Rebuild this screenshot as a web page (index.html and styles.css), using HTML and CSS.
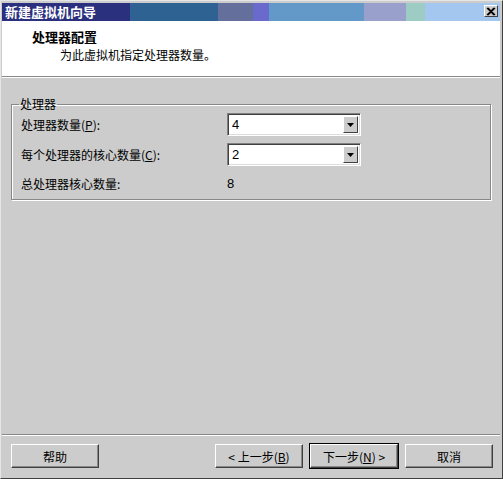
FILE: index.html
```html
<!DOCTYPE html>
<html>
<head>
<meta charset="utf-8">
<link rel="stylesheet" href="styles.css">
</head>
<body>
<div class="window">
  <div class="titlebar">
    <div class="grad">
      <span class="seg s1"></span><span class="seg s2"></span><span class="seg s3"></span><span class="seg s4"></span><span class="seg s5"></span><span class="seg s6"></span><span class="seg s7"></span><span class="seg s8"></span>
    </div>
    <span class="title">新建虚拟机向导</span>
    <span class="close"><svg width="10" height="9" viewBox="0 0 10 9"><path d="M1 1L8 8M2 1L9 8M8 1L1 8M9 1L2 8" stroke="#000" stroke-width="1.2"/></svg></span>
  </div>
  <div class="header">
    <div class="h-title">处理器配置</div>
    <div class="h-sub">为此虚拟机指定处理器数量。</div>
  </div>
  <div class="body">
    <fieldset class="group">
      <legend>处理器</legend>
      <div class="row">
        <span class="label">处理器数量(<u>P</u>):</span>
        <div class="combo"><span class="val">4</span><span class="arrow"><svg width="7" height="4" viewBox="0 0 7 4"><path d="M0 0H7L3.5 4Z" fill="#000"/></svg></span></div>
      </div>
      <div class="row">
        <span class="label">每个处理器的核心数量(<u>C</u>):</span>
        <div class="combo"><span class="val">2</span><span class="arrow"><svg width="7" height="4" viewBox="0 0 7 4"><path d="M0 0H7L3.5 4Z" fill="#000"/></svg></span></div>
      </div>
      <div class="row total">
        <span class="label">总处理器核心数量:</span>
        <span class="num">8</span>
      </div>
    </fieldset>
  </div>
  <div class="footer">
    <button class="btn">帮助</button>
    <div class="spacer"></div>
    <button class="btn">&lt; 上一步(<u>B</u>)</button>
    <button class="btn def">下一步(<u>N</u>) &gt;</button>
    <button class="btn">取消</button>
  </div>
</div>
</body>
</html>
```
FILE: styles.css
```css
html, body { margin: 0; padding: 0; }
body {
  width: 503px; height: 479px; overflow: hidden;
  background: #cccccc;
  font-family: "Noto Sans CJK SC", "Liberation Sans", sans-serif;
  font-size: 12px; color: #000;
}
.window {
  width: 503px; height: 479px; box-sizing: border-box;
  border-left: 1px solid #e6e6e6; border-top: 1px solid #e6e6e6;
  border-right: 1px solid #404040; border-bottom: 1px solid #404040;
  padding: 2px 2px 0 1px;
  display: flex; flex-direction: column;
  background: #cccccc;
}
.titlebar {
  position: relative; height: 18px; flex: none;
}
.grad { display: flex; height: 100%; }
.seg { display: block; height: 100%; }
.s1 { width: 128px; background: #2a2f7e; }
.s2 { width: 88px; background: #2e6293; }
.s3 { width: 35px; background: #656f9b; }
.s4 { width: 16px; background: #6a6acc; }
.s5 { width: 95px; background: #6399c8; }
.s6 { width: 42px; background: #9aa0cc; }
.s7 { width: 19px; background: #9dccc4; }
.s8 { flex: 1; background: #a3c7ef; }
.title {
  position: absolute; left: 3px; top: 0; line-height: 18px;
  color: #fff; font-weight: bold; font-size: 13px;
}
.close {
  position: absolute; right: 2px; top: 2px; width: 14px; height: 12px;
  background: #cccccc; box-sizing: border-box;
  border-left: 1px solid #fff; border-top: 1px solid #fff;
  border-right: 1px solid #404040; border-bottom: 1px solid #404040;
  display: flex; align-items: center; justify-content: center;
}
.header {
  height: 56px; flex: none; background: #fff;
  border-bottom: 1px solid #888; box-shadow: 0 1px 0 #fff;
  box-sizing: border-box; padding: 8px 0 0 30px;
}
.h-title { font-weight: bold; line-height: 16px; font-size: 13px; }
.h-sub { padding-left: 28px; line-height: 16px; margin-top: 2px; }
.body { flex: 1; padding: 20px 9px 0 9px; }
.group {
  margin: 0; padding: 2px 10px 0 9px; height: 103px; box-sizing: border-box;
  border: 1px solid #888; box-shadow: inset 1px 1px 0 #fff, 1px 1px 0 #fff;
}
.group legend { padding: 0 1px; margin-left: -2px; line-height: 14px; }
.row { display: flex; align-items: center; height: 23px; margin-bottom: 7px; }
.row.total { margin-top: 0; margin-bottom: 0; height: 20px; }
.label { width: 206px; flex: none; }
.combo {
  width: 134px; height: 23px; box-sizing: border-box; background: #fff;
  border-left: 1px solid #808080; border-top: 1px solid #808080;
  border-right: 1px solid #fff; border-bottom: 1px solid #fff;
  box-shadow: inset 1px 1px 0 #404040, inset -1px -1px 0 #ddd;
  display: flex; align-items: center; padding: 2px;
}
.val { flex: 1; padding-left: 2px; font-family: "Liberation Sans", sans-serif; font-size: 13px; }
.arrow {
  width: 15px; height: 17px; box-sizing: border-box; background: #cccccc;
  border-left: 1px solid #fff; border-top: 1px solid #fff;
  border-right: 1px solid #404040; border-bottom: 1px solid #404040;
  display: flex; align-items: center; justify-content: center;
}
.num { font-family: "Liberation Sans", sans-serif; font-size: 13px; }
.footer {
  flex: none; height: 44px; box-sizing: border-box;
  border-top: 1px solid #888; box-shadow: inset 0 1px 0 #fff;
  display: flex; align-items: flex-start; padding: 9px 7px 0 9px; gap: 7px;
}
.spacer { flex: 1; }
.btn {
  width: 88px; height: 24px; margin: 0; padding: 0;
  background: #cccccc; font-family: inherit; font-size: 12px; color: #000;
  border-left: 1px solid #fff; border-top: 1px solid #fff;
  border-right: 1px solid #404040; border-bottom: 1px solid #404040;
  box-shadow: inset -1px -1px 0 #888;
}
.btn.def { outline: 1px solid #000; outline-offset: 0; }
u { text-decoration: underline; }
```
